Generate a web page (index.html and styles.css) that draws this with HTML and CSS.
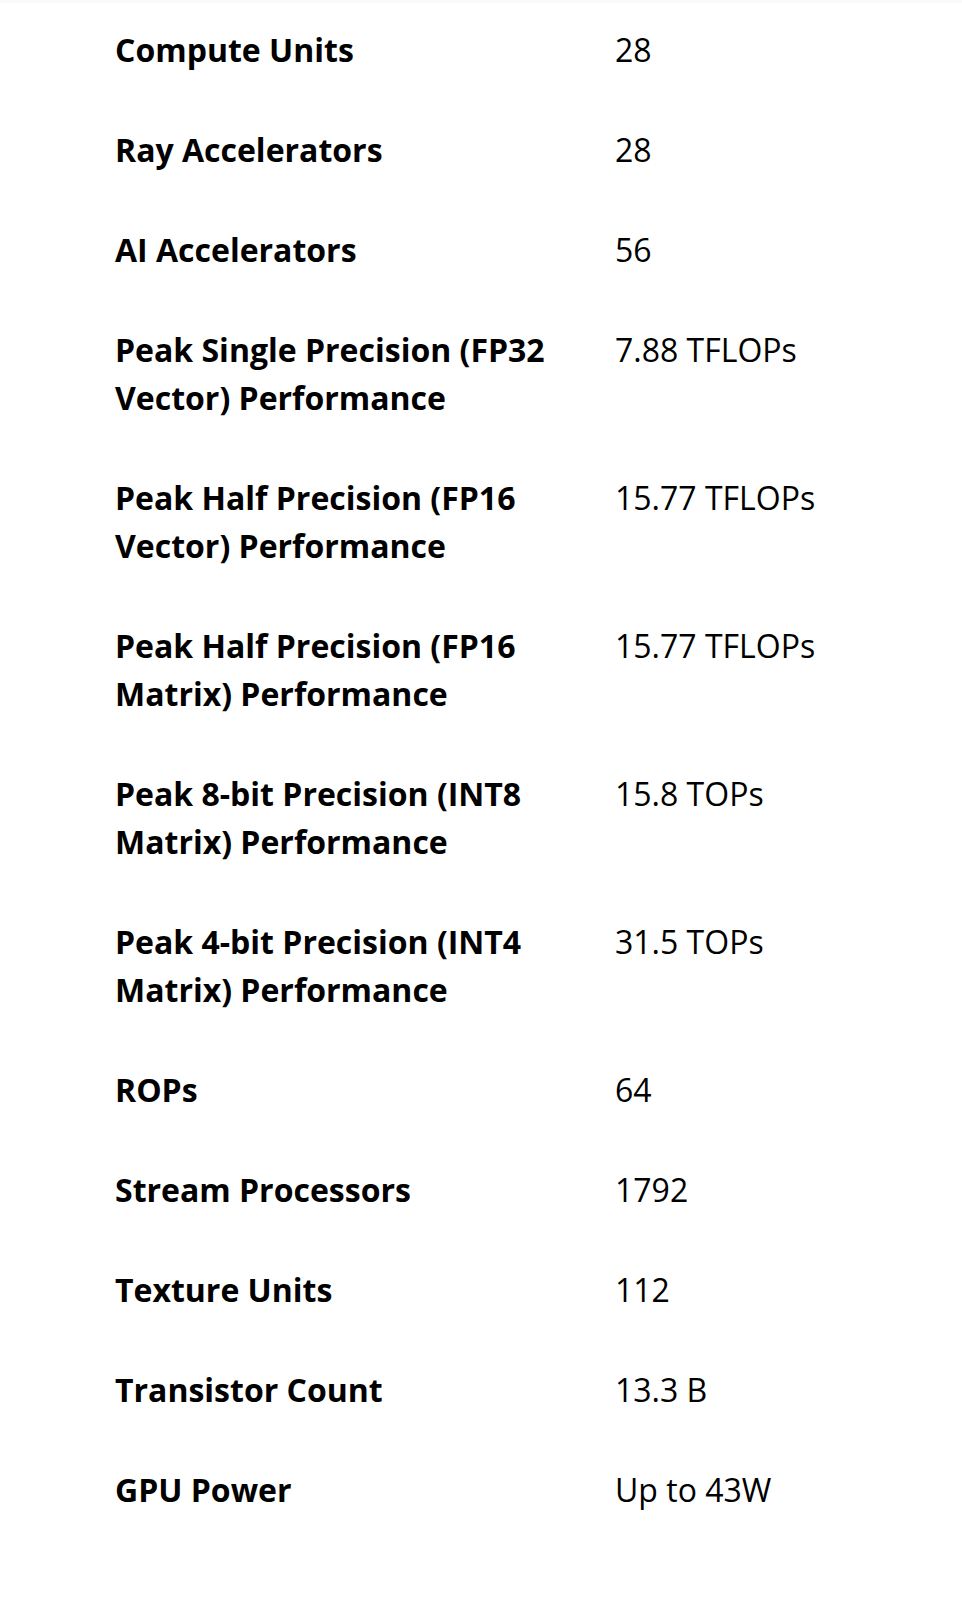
FILE: index.html
```html
<!DOCTYPE html>
<html>
<head>
<meta charset="utf-8">
<link rel="stylesheet" href="styles.css">
</head>
<body>
<div class="topline"></div>
<div class="specs">
  <div class="row"><div class="label">Compute Units</div><div class="value">28</div></div>
  <div class="row"><div class="label">Ray Accelerators</div><div class="value">28</div></div>
  <div class="row"><div class="label">AI Accelerators</div><div class="value">56</div></div>
  <div class="row"><div class="label">Peak Single Precision (FP32 Vector) Performance</div><div class="value">7.88 TFLOPs</div></div>
  <div class="row"><div class="label">Peak Half Precision (FP16 Vector) Performance</div><div class="value">15.77 TFLOPs</div></div>
  <div class="row"><div class="label">Peak Half Precision (FP16 Matrix) Performance</div><div class="value">15.77 TFLOPs</div></div>
  <div class="row"><div class="label">Peak 8-bit Precision (INT8 Matrix) Performance</div><div class="value">15.8 TOPs</div></div>
  <div class="row"><div class="label">Peak 4-bit Precision (INT4 Matrix) Performance</div><div class="value">31.5 TOPs</div></div>
  <div class="row"><div class="label">ROPs</div><div class="value">64</div></div>
  <div class="row"><div class="label">Stream Processors</div><div class="value">1792</div></div>
  <div class="row"><div class="label">Texture Units</div><div class="value">112</div></div>
  <div class="row"><div class="label">Transistor Count</div><div class="value">13.3 B</div></div>
  <div class="row"><div class="label">GPU Power</div><div class="value">Up to 43W</div></div>
</div>
</body>
</html>
```

FILE: styles.css
```css
html, body {
  margin: 0;
  padding: 0;
  background: #ffffff;
}
body {
  font-family: "Open Sans", "Liberation Sans", sans-serif;
  color: #000000;
  font-size: 32px;
  line-height: 48px;
}
.topline {
  height: 3px;
  background: #f9f9f9;
}
.specs {
  display: flex;
  flex-direction: column;
  gap: 52px;
  padding: 23px 0 0 115px;
}
.row {
  display: grid;
  grid-template-columns: 500px 1fr;
}
.label {
  font-weight: 700;
  padding-right: 30px;
}
.value {
  font-weight: 400;
}
```
